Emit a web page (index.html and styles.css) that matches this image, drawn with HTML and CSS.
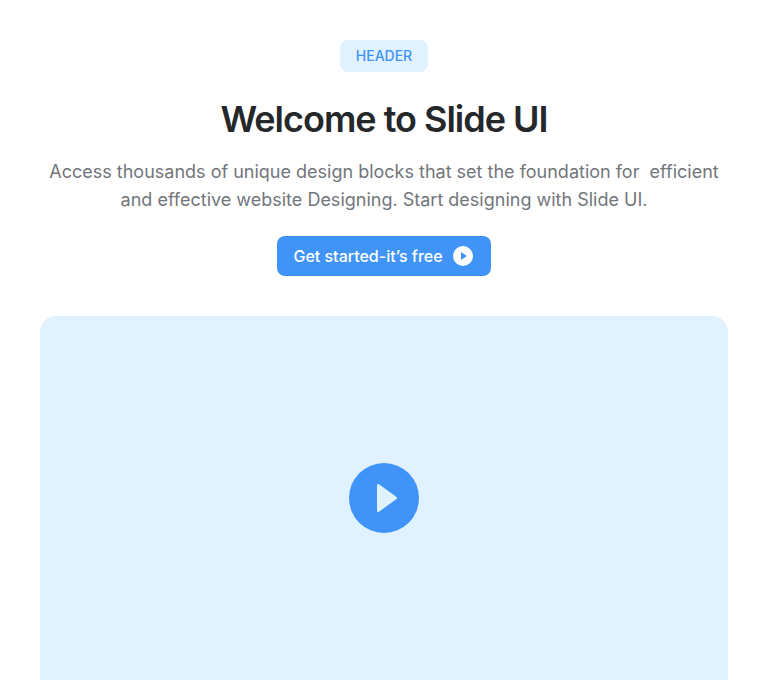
FILE: index.html
```html
<!DOCTYPE html>
<html lang="en">
<head>
<meta charset="utf-8">
<meta name="viewport" content="width=device-width, initial-scale=1">
<title>Slide UI</title>
<link rel="stylesheet" href="styles.css">
</head>
<body>
<main class="hero">
  <span class="badge">HEADER</span>
  <h1 class="title">Welcome to Slide UI</h1>
  <p class="lead">Access thousands of unique design blocks that set the foundation for&nbsp; efficient and effective website Designing. Start designing with Slide UI.</p>
  <button class="cta" type="button">
    <span>Get started-it’s free</span>
    <svg class="cta-icon" viewBox="0 0 24 24" aria-hidden="true"><circle cx="12" cy="12" r="10" fill="#fff"/><path d="M10 8.9v6.2q0 .9.8.4l4.400-3q.7-.5 0-1l-4.400-3q-.8-.5-.8.4z" fill="#4094f7"/></svg>
  </button>
  <section class="video" aria-label="Video">
    <button class="play" type="button" aria-label="Play video">
      <svg class="play-icon" viewBox="0 0 70 70" aria-hidden="true"><path d="M28 22.800v24.400q0 2.800 2.400 1.200l16.800-12.100q1.800-1.300 0-2.600L30.400 21.600q-2.400-1.600-2.400 1.200z" fill="#e0f1ff"/></svg>
    </button>
  </section>
</main>
</body>
</html>
```
FILE: styles.css
```css
* {
  box-sizing: border-box;
}

body {
  margin: 0;
  background: #fff;
  font-family: Inter, "Liberation Sans", sans-serif;
}

button {
  border: 0;
  font: inherit;
  cursor: pointer;
}

.hero {
  display: flex;
  flex-direction: column;
  align-items: center;
  min-height: 100vh;
  padding: 40px 40px 0;
  text-align: center;
}

.badge {
  padding: 4px 16px;
  border-radius: 8px;
  background: #e0f1ff;
  color: #4094f7;
  font-size: 14px;
  font-weight: 500;
  line-height: 24px;
}

.title {
  margin: 24px 0 16px;
  color: #25282b;
  font-size: 36px;
  font-weight: 600;
  line-height: 46px;
  letter-spacing: -1px;
}

.lead {
  margin: 0 0 22px;
  color: #72767b;
  font-size: 18px;
  line-height: 28px;
}

.cta {
  display: flex;
  align-items: center;
  gap: 8px;
  padding: 8px 16px;
  border-radius: 8px;
  background: #4094f7;
  color: #fff;
  font-size: 16px;
  font-weight: 500;
  line-height: 24px;
}

.cta-icon {
  width: 24px;
  height: 24px;
}

.video {
  display: flex;
  flex: 1;
  align-items: center;
  justify-content: center;
  width: 100%;
  min-height: 363px;
  margin-top: 40px;
  border-radius: 16px 16px 0 0;
  background: #e0f1ff;
}

.play {
  width: 70px;
  height: 70px;
  padding: 0;
  border-radius: 50%;
  background: #4094f7;
}

.play-icon {
  display: block;
  width: 100%;
  height: 100%;
}
```
